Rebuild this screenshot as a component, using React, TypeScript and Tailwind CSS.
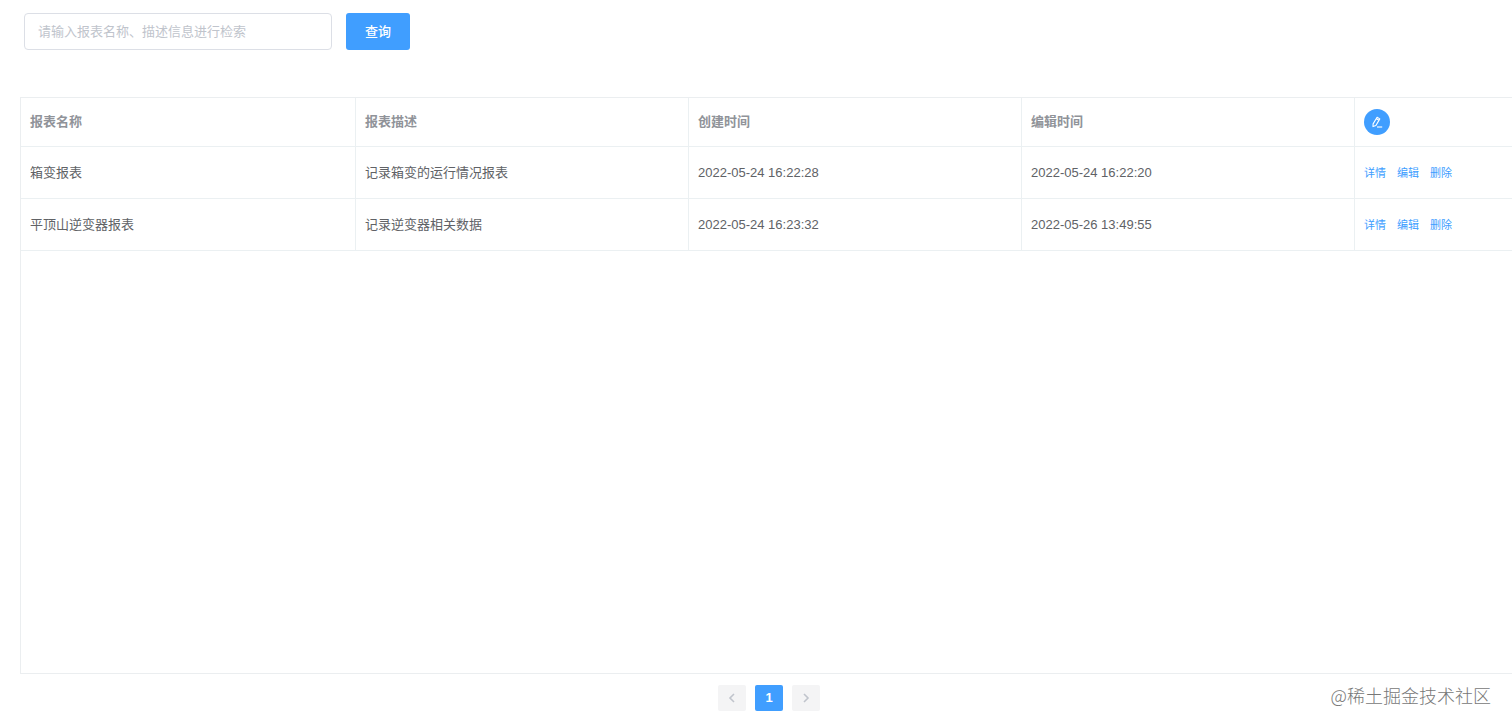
import { useState } from 'react'

interface Report {
  id: number
  name: string
  desc: string
  createdAt: string
  updatedAt: string
}

const reports: Report[] = [
  { id: 1, name: '箱变报表', desc: '记录箱变的运行情况报表', createdAt: '2022-05-24 16:22:28', updatedAt: '2022-05-24 16:22:20' },
  { id: 2, name: '平顶山逆变器报表', desc: '记录逆变器相关数据', createdAt: '2022-05-24 16:23:32', updatedAt: '2022-05-26 13:49:55' },
]

const actions = ['详情', '编辑', '删除']

function EditPenIcon() {
  return (
    <svg className="h-3.5 w-3.5" viewBox="0 0 14 14" fill="none" stroke="currentColor" strokeWidth="1.1" strokeLinejoin="round" aria-hidden="true">
      <path d="M7.1 2.3 9.8 3.9 5.9 10.5 3 11.6 3.1 8.9ZM6.3 3.8 8.9 5.3" />
      <path d="M7 12H12.2" />
    </svg>
  )
}

function Chevron({ d }: { d: string }) {
  return (
    <svg className="h-3 w-3" viewBox="0 0 12 12" fill="none" stroke="currentColor" strokeWidth="1.6" aria-hidden="true">
      <path d={d} />
    </svg>
  )
}

function SearchBar({ onSearch }: { onSearch: (value: string) => void }) {
  const [value, setValue] = useState('')

  return (
    <form
      className="flex gap-3.5 pl-6 pt-[13px]"
      onSubmit={(e) => {
        e.preventDefault()
        onSearch(value)
      }}
    >
      <input
        type="text"
        aria-label="请输入报表名称、描述信息进行检索"
        placeholder="请输入报表名称、描述信息进行检索"
        value={value}
        onChange={(e) => setValue(e.target.value)}
        className="h-[37px] w-[308px] rounded border border-[#dcdfe6] bg-white px-[13px] text-[13px] placeholder:text-[#c0c4cc] focus:border-[#409eff] focus:outline-none"
      />
      <button type="submit" className="h-[37px] w-16 rounded-[3px] bg-[#409eff] text-[13px] font-medium text-white hover:bg-[#66b1ff]">
        查询
      </button>
    </form>
  )
}

function ReportTable({ rows }: { rows: Report[] }) {
  return (
    <div className="mt-[47px] flex-1 border-y border-l border-[#ebeef0]">
      <table className="w-full table-fixed border-separate border-spacing-0 text-left text-[13px] [&_td]:border-b [&_td]:border-r [&_td]:border-[#ebf0f2] [&_td]:px-[9px] [&_td:last-child]:border-r-0 [&_th]:border-b [&_th]:border-r [&_th]:border-[#ebf0f2] [&_th]:px-[9px] [&_th:last-child]:border-r-0">
        <thead>
          <tr className="h-[49px] text-[#909399]">
            <th scope="col" className="w-[335px] font-bold">报表名称</th>
            <th scope="col" className="font-bold">报表描述</th>
            <th scope="col" className="font-bold">创建时间</th>
            <th scope="col" className="font-bold">编辑时间</th>
            <th scope="col" className="w-[157px]">
              <button type="button" aria-label="新建报表" className="flex h-[26px] w-[26px] items-center justify-center rounded-full bg-[#409eff] text-white">
                <EditPenIcon />
              </button>
            </th>
          </tr>
        </thead>
        <tbody>
          {rows.map((row) => (
            <tr key={row.id} className="h-[52px]">
              <td>{row.name}</td>
              <td>{row.desc}</td>
              <td>{row.createdAt}</td>
              <td>{row.updatedAt}</td>
              <td>
                <div className="flex gap-[11px] pt-px text-[11px] text-[#409eff]">
                  {actions.map((action) => (
                    <button key={action} type="button" className="hover:text-[#66b1ff]">
                      {action}
                    </button>
                  ))}
                </div>
              </td>
            </tr>
          ))}
        </tbody>
      </table>
    </div>
  )
}

function Pagination() {
  return (
    <nav aria-label="分页" className="flex justify-center gap-[9px] pb-[17px] pl-1.5 pt-[11px]">
      <button type="button" aria-label="上一页" disabled className="flex h-[26px] w-7 items-center justify-center rounded-xs bg-[#f4f4f5] text-[#c0c4cc]">
        <Chevron d="M8 2 4 6l4 4" />
      </button>
      <button type="button" aria-current="page" className="h-[26px] w-7 rounded-xs bg-[#409eff] text-[13px] font-bold text-white">
        1
      </button>
      <button type="button" aria-label="下一页" disabled className="flex h-[26px] w-7 items-center justify-center rounded-xs bg-[#f4f4f5] text-[#c0c4cc]">
        <Chevron d="m4 2 4 4-4 4" />
      </button>
    </nav>
  )
}

export default function App() {
  const [keyword, setKeyword] = useState('')
  const rows = reports.filter((r) => r.name.includes(keyword) || r.desc.includes(keyword))

  return (
    <div className="relative flex min-h-screen flex-col bg-white font-['Liberation_Sans','Noto_Sans_CJK_SC',sans-serif] text-[#606266]">
      <SearchBar onSearch={setKeyword} />
      <main className="flex flex-1 flex-col pl-5">
        <ReportTable rows={rows} />
        <Pagination />
      </main>
      {/* Watermark */}
      <span className="pointer-events-none absolute bottom-[19px] right-[21px] font-['Noto_Sans_CJK_SC',sans-serif] text-lg font-light text-[#777]">
        @稀土掘金技术社区
      </span>
    </div>
  )
}
